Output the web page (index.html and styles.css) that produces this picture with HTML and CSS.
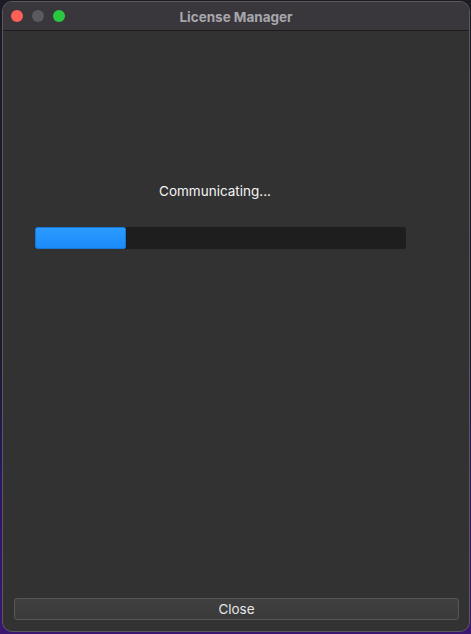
FILE: index.html
```html
<!DOCTYPE html>
<html lang="en">
<head>
<meta charset="utf-8">
<title>License Manager</title>
<link rel="stylesheet" href="styles.css">
</head>
<body>
<div class="window">
  <div class="titlebar">
    <div class="lights">
      <span class="light red"></span>
      <span class="light gray"></span>
      <span class="light green"></span>
    </div>
    <div class="title">License Manager</div>
  </div>
  <div class="content">
    <div class="main">
      <div class="status">Communicating...</div>
      <div class="track"><div class="fill" style="width:91px"></div></div>
    </div>
    <button class="close">Close</button>
  </div>
</div>
</body>
</html>
```
FILE: styles.css
```css
html, body {
  margin: 0;
  padding: 0;
  width: 471px;
  height: 634px;
  overflow: hidden;
}
body {
  background: linear-gradient(180deg, #1c1b24 0%, #1d1a2a 55%, #2a1760 75%, #3b1670 100%);
  font-family: "Inter", "Liberation Sans", sans-serif;
  padding: 1px 1px 2px 2px;
  box-sizing: border-box;
}
.window {
  width: 468px;
  height: 631px;
  box-sizing: border-box;
  border-radius: 10px;
  border: 1px solid #5a5a5e;
  background: #323232;
  overflow: hidden;
  display: flex;
  flex-direction: column;
}
.titlebar {
  height: 28px;
  flex: none;
  background: #39373c;
  border-bottom: 1px solid #1c1c1c;
  position: relative;
  display: flex;
  align-items: center;
  justify-content: center;
}
.lights {
  position: absolute;
  left: 8px;
  top: 8px;
  display: flex;
  gap: 9px;
}
.light {
  width: 12px;
  height: 12px;
  border-radius: 50%;
  display: block;
}
.red { background: #fe5f57; }
.gray { background: #5b5a60; }
.green { background: #29c840; }
.title {
  color: #a8a7ac;
  font-weight: 700;
  font-size: 13.5px;
  padding-top: 1px;
}
.content {
  flex: 1;
  display: flex;
  flex-direction: column;
  padding: 0 10px 11px 11px;
}
.main {
  flex: 1;
  padding: 152px 53px 0 21px;
}
.status {
  color: #f4f4f4;
  font-size: 13.5px;
  line-height: 16px;
  text-align: center;
  padding-right: 11px;
  margin-bottom: 28px;
}
.track {
  height: 22px;
  background: #1e1e1e;
  border-radius: 2px;
  overflow: hidden;
}
.fill {
  height: 100%;
  box-sizing: border-box;
  background: linear-gradient(180deg, #2b9bff 0%, #1a8bf8 100%);
  border: 1px solid #1677d6;
  border-radius: 2px;
}
.close {
  height: 22px;
  width: 445px;
  margin: 0;
  box-sizing: border-box;
  background: linear-gradient(180deg, #404040 0%, #3a3a3a 100%);
  border: 1px solid #575757;
  border-radius: 3px;
  color: #e6e6e6;
  font-family: "Inter", "Liberation Sans", sans-serif;
  font-size: 13.5px;
  padding: 0;
  line-height: 20px;
}
```
